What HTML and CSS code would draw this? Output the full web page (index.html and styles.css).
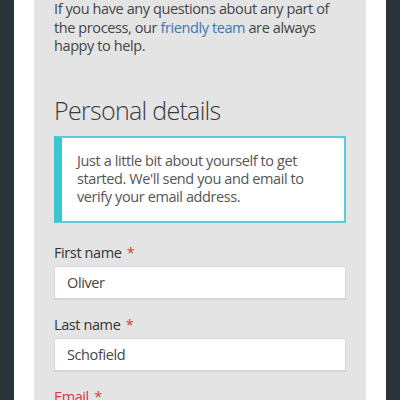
FILE: index.html
```html
<!DOCTYPE html>
<html>
<head>
<meta charset="utf-8">
<link rel="stylesheet" href="styles.css">
</head>
<body>
<div class="frame">
  <div class="side side-left"></div>
  <div class="gutter"></div>
  <main class="panel">
    <p class="intro">If you have any questions about any part of the process, our <a class="link" href="#">friendly team</a> are always happy to help.</p>
    <h2 class="heading">Personal details</h2>
    <div class="info">Just a little bit about yourself to get started. We'll send you and email to verify your email address.</div>
    <div class="field">
      <label class="label">First name <span class="req">*</span></label>
      <div class="input">Oliver</div>
    </div>
    <div class="field">
      <label class="label">Last name <span class="req">*</span></label>
      <div class="input">Schofield</div>
    </div>
    <div class="field">
      <label class="label label-error">Email <span class="req">*</span></label>
      <div class="input"></div>
    </div>
  </main>
  <div class="gutter"></div>
  <div class="side side-right"></div>
</div>
</body>
</html>
```
FILE: styles.css
```css
html, body {
  margin: 0;
  padding: 0;
  height: 400px;
  overflow: hidden;
}
body {
  font-family: "Open Sans", "Noto Sans", sans-serif;
  color: #444;
  background: #2a343b;
  letter-spacing: -0.4px;
}
.frame {
  display: flex;
  height: 400px;
}
.side {
  width: 14px;
  background: #2a343b;
  flex: none;
}
.gutter {
  width: 20px;
  background: #ffffff;
  flex: none;
}
.panel {
  width: 292px;
  flex: none;
  background: #e4e4e4;
  padding: 0 20px;
  overflow: hidden;
}
.intro {
  margin: 0;
  font-size: 14.5px;
  line-height: 18.5px;
  color: #444;
}
.link {
  color: #3479b5;
  text-decoration: none;
}
.heading {
  margin: 38px 0 10px;
  font-size: 25px;
  font-weight: 300;
  line-height: 32px;
  color: #3a3a3a;
  letter-spacing: -0.7px;
}
.info {
  background: #fff;
  border: 2px solid #5ccbd5;
  border-left: 8px solid #3cc6d3;
  padding: 14px 15px 15px 15px;
  font-size: 14.5px;
  line-height: 18px;
  color: #555;
}
.field {
  margin-top: 20px;
}
.field + .field {
  margin-top: 15px;
}
.label {
  display: block;
  font-size: 14.5px;
  line-height: 20px;
  color: #333;
  margin-bottom: 3px;
}
.label-error {
  color: #d9383a;
}
.req {
  color: #d9383a;
  margin-left: 2px;
}
.input {
  height: 31px;
  background: #fff;
  border: 1px solid #d3d6de;
  border-bottom-width: 2px;
  padding: 0 12px;
  font-size: 14.5px;
  line-height: 31px;
  color: #444;
}
```
